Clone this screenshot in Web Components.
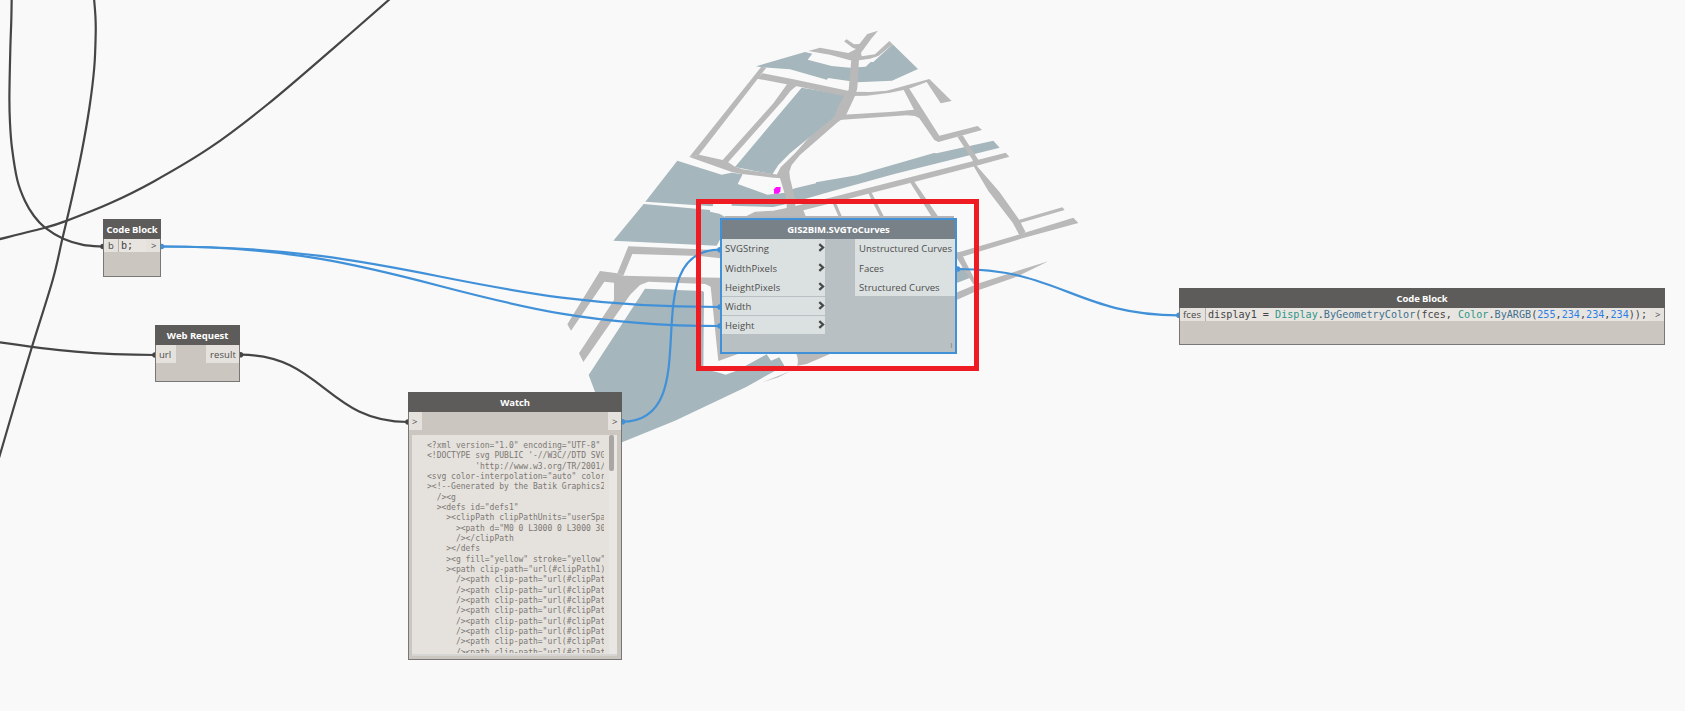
<!DOCTYPE html>
<html lang="en">
<head>
<meta charset="utf-8">
<title>Graph workspace</title>
<style>
html,body{margin:0;height:100%;overflow:hidden;background:#f9f9f9}
</style>
</head>
<body>
<graph-workspace></graph-workspace>
<script>
// Text set to an exact advance width, spread over its letters.
class FitText extends HTMLElement{
  connectedCallback(){
    const r=this.attachShadow({mode:'open'});
    r.innerHTML=`<style>:host{display:inline-block;white-space:pre}span{display:inline-block}</style><span><slot></slot></span>`;
    const s=r.querySelector('span'),w=+this.getAttribute('w'),n=this.textContent.length;
    s.style.letterSpacing=((w-s.getBoundingClientRect().width)/n)+'px';
  }
}

// Geometry preview behind the nodes.
class MapPreview extends HTMLElement{
  connectedCallback(){
    this.attachShadow({mode:'open'}).innerHTML=`<style>:host{position:absolute;inset:0;display:block}svg{display:block}.t{fill:#a5b6bc}.g{fill:#b9b9b9}</style>
<svg width="1685" height="711">
<g transform="translate(560 20) scale(.33333)">
 <g class="t">
  <path d="M588 139 735 96 757 101 743 119 815 138 870 143 917 140 932 126 940 126 998 73 1074 147 996 182 892 187 820 176 805 174 800 179 690 148 605 142Z"/>
  <path d="M725 203 866 226 840 290 745 355 690 400 655 435 637 463 525 441Z"/>
  <path d="M352 422 485 464 515 458 548 463 533 492 622 524 675 518 705 505 768 490 768 487 890 466 1010 431 1122 399 1130 400 1300 362 1319 383 1000 463 810 515 690 550 640 561 515 557 515 552 460 552 458 559 256 545Z"/>
  <path d="M251 552 450 570 450 575 478 581 497 592 490 655 482 655 470 677 160 662Z"/>
 </g>
 <g class="g">
  <path d="M604 140 619 143 416 405 388 411Z"/>
  <path d="M608 160 700 178 885 217 870 232 722 201 591 176Z"/>
  <path d="M683 190 710 197 692 212 670 240 503 428 488 420 640 250 665 215Z"/>
  <path d="M388 411 417 404 498 422 525 440 548 448 655 464 668 475 640 473 540 461 515 456Z"/>
  <path d="M874 118 897 118 892 205 885 228 856 290 830 309 720 405 695 435 688 455 690 475 705 535 708 600 680 600 680 540 660 475 650 464 662 442 705 400 745 355 824 289 832 265 851 229 866 210Z"/>
  <path d="M745 93 780 83 865 99 888 87 878 83 852 64 860 58 882 73 898 72 922 42 954 32 935 55 903 98 905 109 945 103 988 63 998 73 955 108 930 116 897 121 870 121 810 104Z"/>
  <path d="M1337 410 1348 410 1250 437 1050 489 840 543 730 571 738 590 555 590 585 575 640 572 690 562 810 533 1240 423 1337 398 1348 410Z"/>
 </g>
 <path d="M648 501H662L661 514 655 521H642V508Z" fill="#ff10ff"/>
</g>
<g class="g" transform="translate(830 20) scale(.33333)">
  <path d="M60 215 120 216 170 212 290 179 298 177 365 243 332 250 290 186 235 207 180 218 110 227 62 228Z"/>
  <path d="M220 208 238 206 328 347 443 318 456 330 325 366 313 360 268 295 255 288 230 286 26 300 40 284 190 275 252 269Z"/>
  <path d="M382 350 398 346 447 422 438 435 508 515 568 600 587 637 568 645 548 608 475 513 430 437 428 420Z"/>
  <path d="M115 520 125 518 162 590H150ZM240 487 252 484 325 590H305ZM8 550 18 548 36 590H26Z"/>
  <path d="M563 601 697 562 704 570 570 609Z"/>
</g>
<g transform="translate(830 190) scale(.33333)">
  <path class="t" d="M378 236 412 230 425 262 378 280Z"/>
  <g class="g"><path d="M378 189 560 136 730 83 745 99 580 144 378 206Z"/>
  <path d="M378 182 400 202 440 280 430 283 378 200Z"/>
  <path d="M378 308 447 280 545 248 655 214 560 260 447 300 378 331Z"/></g>
</g>
<g transform="translate(560 210) scale(.33333)">
  <path class="t" d="M255 236 428 243 432 247 430 478 470 486 497 494 530 482 620 433 633 452 658 442 673 467 560 530 345 632 186 697 105 545 86 495Z"/>
  <g class="g"><path d="M205 109 420 118 482 122 482 145 420 138 217 132 190 197 172 190Z"/>
  <path d="M120 183 172 190 190 197 345 201 482 203 482 430 540 430 475 453 452 230 436 222 265 215 240 225 210 255 70 456 57 430 162 270 162 218 133 215 33 362 22 343Z"/>
  <path d="M708 430H815L740 462 712 467Q717 448 708 430ZM608 517 690 484 655 502Z"/></g>
</g>
<rect x="725" y="216" width="229" height="2" fill="#b5b5b5"/>
</svg>`;
  }
}

// Smooth path through a list of points.
const spline=p=>{
  let d=`M${p[0]}`;
  for(let i=0;i<p.length-1;i++){
    const a=p[i-1]||p[i],b=p[i],c=p[i+1],e=p[i+2]||c;
    d+=`C${b[0]+(c[0]-a[0])/6} ${b[1]+(c[1]-a[1])/6} ${c[0]-(e[0]-b[0])/6} ${c[1]-(e[1]-b[1])/6} ${c}`;
  }
  return d;
};
// Connector between an output and an input port.
const link=(x1,y1,x2,y2)=>{
  const o=.45*Math.hypot(x2-x1,y2-y1);
  return `M${x1} ${y1}C${x1+o} ${y1} ${x2-o} ${y2} ${x2} ${y2}`;
};
class WireLayer extends HTMLElement{
  connectedCallback(){
    const dark=[
      spline([[11.7,-2],[11.3,20],[10.3,50],[9.4,97],[10,123],[12,148],[17.3,180],[25,201],[34,216],[44.7,227.3],[63.3,238.7],[83,244.8],[103,246.5]]),
      spline([[94,-2],[95.4,16],[95.7,33],[94.3,67],[89.5,107],[81.7,152],[71.7,199],[62.3,239],[52.7,280],[32,346.7],[16,400],[-1,458]]),
      spline([[391,-2],[333.3,48.3],[266.7,105],[210,147.7],[153.3,181.7],[110,203.3],[66.7,220.7],[45.7,227.5],[-2,239.5]]),
      'M-2 342.1C55 350.5 95 355 155 355', link(241,354.7,408,422)];
    const blue=[link(162,246.5,720,307),link(162,246.5,720,326),link(622,421.7,720,249.7),link(958,269,1179,315.3)];
    const dot=(x,y)=>`<circle cx="${x}" cy="${y}" r="2.8"/>`;
    this.attachShadow({mode:'open'}).innerHTML=`<style>:host{position:absolute;inset:0;display:block}svg{display:block}path{fill:none;stroke-width:2.2}</style>
<svg width="1685" height="711"><g stroke="#454545">${dark.map(d=>`<path d="${d}"/>`).join('')}</g>
<g stroke="#4191d9">${blue.map(d=>`<path d="${d}"/>`).join('')}</g>
<g fill="#454545">${dot(103,246.5)+dot(155,355)+dot(240.5,354.7)+dot(408,422)}</g>
<g fill="#4191d9">${dot(161.5,246.5)+dot(622.5,421.7)+dot(720,249.7)+dot(720,307)+dot(720,326)+dot(957.5,269)+dot(1179,315.3)}</g></svg>`;
  }
}

// A node: title bar, then a body holding its ports.
class GraphNode extends HTMLElement{
  connectedCallback(){
    const [x,y,w,h]=this.getAttribute('box').split(' ');
    this.style.cssText=`left:${x}px;top:${y}px;width:${w}px;height:${h}px`;
    this.attachShadow({mode:'open'}).innerHTML=`<style>
:host{position:absolute;display:flex;flex-direction:column;box-sizing:border-box;border:1px solid #797775;background:#cbc6bf;color:#4c4c4c;font:9.5px/19px "Open Sans",sans-serif}
:host([selected]){border:2px solid #4191d9;background:#b8c0c3}
header{flex:none;box-sizing:border-box;height:20px;margin:-1px -1px 0;padding-top:1px;background:#5e5c5a;color:#fff;font-weight:700;text-align:center;line-height:20px}
:host([selected]) header{margin:0;height:19px;padding:0;background:#778187}
.body{flex:1;display:flex;justify-content:space-between;align-items:flex-start;min-height:0}
:host([stack]) .body{flex-direction:column;align-items:stretch;justify-content:flex-start}
</style><header><fit-text w="${this.getAttribute('tw')}">${this.getAttribute('name')}</fit-text></header><div class="body"><slot></slot></div>`;
  }
}

// One input or output port.
class NodePort extends HTMLElement{
  connectedCallback(){
    this.attachShadow({mode:'open'}).innerHTML=`<style>
:host{display:flex;justify-content:space-between;align-items:center;box-sizing:border-box;height:var(--h,18px);line-height:var(--h,18px);padding:var(--pt,2px) var(--pr,3px) 0 var(--pl,4px);background:var(--bg,#e5e2dd)}
svg{display:block;margin:-2px -3px 0 0}
</style><slot></slot>${this.hasAttribute('chevron')?'<svg width="7" height="9"><path d="M1.3 1.1 5 4.5 1.3 7.9" fill="none" stroke="#484848" stroke-width="2.3"/></svg>':''}`;
  }
}

// Column of ports in the selected node.
class PortList extends HTMLElement{
  connectedCallback(){
    this.attachShadow({mode:'open'}).innerHTML=`<style>
:host{display:flex;flex-direction:column;--h:19px;--bg:#dbe1e1;--pl:3px}
::slotted([split]){border-top:1px solid #b8c0c3;--pt:0px}
::slotted(:first-child){--pt:0px}
</style><slot></slot>`;
  }
}

// Row of source code between the ports of a code block.
class CodeRow extends HTMLElement{
  connectedCallback(){
    this.attachShadow({mode:'open'}).innerHTML=`<style>
:host{display:flex;flex:1;height:13px;max-height:13px;--h:13px;--pt:0px;background:#e8e5e1;color:#444}
.code{flex:1;border-left:1px solid #b3afaa;padding-left:2px;font:10.13px/13px "DejaVu Sans Mono",monospace;white-space:pre}
.code ::slotted(span){display:inline-block;transform:scaleY(1.12);transform-origin:50% 70%}
</style><slot name="in"></slot><div class="code"><slot></slot></div><slot name="out"></slot>`;
  }
}

class WatchView extends HTMLElement{
  connectedCallback(){
    const p='      /><path clip-path="url(#clipPat';
    const t=['<?xml version="1.0" encoding="UTF-8"','<!DOCTYPE svg PUBLIC \'-//W3C//DTD SVG','          \'http://www.w3.org/TR/2001/',
    '<svg color-interpolation="auto" color','><!--Generated by the Batik Graphics2','  /><g','  ><defs id="defs1"','    ><clipPath clipPathUnits="userSpa','      ><path d="M0 0 L3000 0 L3000 30','      /></clipPath','    ></defs','    ><g fill="yellow" stroke="yellow"','    ><path clip-path="url(#clipPath1)',p,p,p,p,p,p,p,p].join('\n');
    this.attachShadow({mode:'open'}).innerHTML=`<style>
:host{display:flex;justify-content:space-between;box-sizing:border-box;height:221px;margin:5px 4px 0 3px;background:#e5e2dd;border-bottom:2px solid #d6d5d3}
pre{box-sizing:border-box;width:192px;height:218px;margin:0;padding:6px 0 0 15px;overflow:hidden;color:#7b7773;font:8px/10.33px "DejaVu Sans Mono",monospace}
.bar{width:8px;background:#e9e7e3}
.thumb{width:5px;height:36px;border-radius:2px;background:#aaa6a3}
</style><pre></pre><div class="bar"><div class="thumb"></div></div>`;
    this.shadowRoot.querySelector('pre').textContent=t;
  }
}

class GraphWorkspace extends HTMLElement{
  connectedCallback(){
    this.attachShadow({mode:'open'}).innerHTML=`<style>
:host{display:block;position:relative;width:1685px;height:711px;overflow:hidden;background:#f9f9f9}
.ports{display:flex;justify-content:space-between}
.type{color:#2f9688}.fn{color:#40708f}.num{color:#2b80e6}
.frame{position:absolute;left:696px;top:199px;width:283px;height:172px;box-sizing:border-box;border:5px solid #ef1b22}
.lace{position:absolute;right:2px;bottom:2px;font-size:6px;line-height:10px;font-weight:700;color:#857b68}
</style>
<map-preview></map-preview><wire-layer></wire-layer>
<graph-node box="103 219 58 58" name="Code Block" tw="51">
 <code-row><node-port slot="in" style="width:14px;--pr:0px"><fit-text w="6">b</fit-text></node-port><span>b;</span><node-port slot="out" style="width:14px;--pl:5px">&gt;</node-port></code-row>
</graph-node>
<graph-node box="155 325 85 57" name="Web Request" tw="61.5">
 <node-port style="width:20px;--pl:3px"><fit-text w="12">url</fit-text></node-port><node-port style="width:33px"><fit-text w="26">result</fit-text></node-port>
</graph-node>
<graph-node box="408 392 214 268" name="Watch" tw="29.5" stack>
 <div class="ports"><node-port style="width:13px;--pl:3px">&gt;</node-port><node-port style="width:13px;--pl:4px">&gt;</node-port></div>
 <watch-view></watch-view>
</graph-node>
<graph-node box="720 218 237 136" name="GIS2BIM.SVGToCurves" tw="102.5" selected>
 <port-list style="width:103px"><node-port chevron><fit-text w="44">SVGString</fit-text></node-port><node-port chevron><fit-text w="52">WidthPixels</fit-text></node-port><node-port chevron><fit-text w="55.3">HeightPixels</fit-text></node-port><node-port chevron split><fit-text w="26.3">Width</fit-text></node-port><node-port chevron split><fit-text w="29.5">Height</fit-text></node-port></port-list>
 <port-list style="width:100px;--pl:4px"><node-port style="--pl:4px"><fit-text w="93">Unstructured Curves</fit-text></node-port><node-port style="--pl:4px"><fit-text w="24.7">Faces</fit-text></node-port><node-port style="--pl:4px"><fit-text w="80.7">Structured Curves</fit-text></node-port></port-list>
 <span class="lace">|</span>
</graph-node>
<graph-node box="1179 288 486 57" name="Code Block" tw="51">
 <code-row><node-port slot="in" style="width:25px;--pl:3px"><fit-text w="18.3">fces</fit-text></node-port><span>display1 = </span><span class="type">Display</span><span>.</span><span class="fn">ByGeometryColor</span><span>(fces, </span><span class="type">Color</span><span>.</span><span class="fn">ByARGB</span><span>(</span><span class="num">255</span><span>,</span><span class="num">234</span><span>,</span><span class="num">234</span><span>,</span><span class="num">234</span><span>));</span><node-port slot="out" style="width:14px;--pl:5px">&gt;</node-port></code-row>
</graph-node>
<div class="frame"></div>`;
  }
}
customElements.define('fit-text',FitText);
customElements.define('map-preview',MapPreview);
customElements.define('wire-layer',WireLayer);
customElements.define('node-port',NodePort);
customElements.define('port-list',PortList);
customElements.define('code-row',CodeRow);
customElements.define('watch-view',WatchView);
customElements.define('graph-node',GraphNode);
customElements.define('graph-workspace',GraphWorkspace);
</script>
</body>
</html>
